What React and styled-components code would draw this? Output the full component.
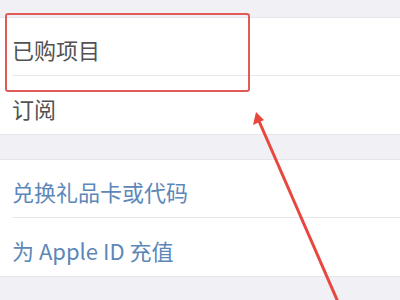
import React from "react";
import styled, { createGlobalStyle } from "styled-components";

const Global = createGlobalStyle`
  html, body { margin: 0; padding: 0; background: #f0f0f5; }
  body { font-family: "Noto Sans CJK SC", "Noto Sans", sans-serif; }
`;

const Page = styled.div`
  position: relative;
  width: 400px;
  height: 300px;
  overflow: hidden;
  background: #f0f0f5;
  padding-top: 17px;
  box-sizing: border-box;
  display: flex;
  flex-direction: column;
  gap: 24px;
`;

const Section = styled.div`
  background: #ffffff;
  border-top: 1px solid #e6e6ea;
  border-bottom: 1px solid #e6e6ea;
`;

const Row = styled.div`
  height: 58px;
  padding-left: 12px;
  display: flex;
`;

const RowInner = styled.div`
  flex: 1;
  display: flex;
  align-items: center;
  padding-top: 5px;
  box-sizing: border-box;
  border-bottom: ${(p) => (p.$last ? "none" : "1px solid #e8e8ec")};
  font-size: 22px;
  color: ${(p) => (p.$link ? "#5d87b8" : "#525254")};
`;

const Overlay = styled.svg`
  position: absolute;
  left: 0;
  top: 0;
  pointer-events: none;
`;

const Item = ({ children, link, last }) => (
  <Row>
    <RowInner $link={link} $last={last}>{children}</RowInner>
  </Row>
);

export default function App() {
  return (
    <>
      <Global />
      <Page>
        <Section>
          <Item>已购项目</Item>
          <Item last>订阅</Item>
        </Section>
        <Section>
          <Item link>兑换礼品卡或代码</Item>
          <Item link last>为 Apple ID 充值</Item>
        </Section>
        <Overlay width="400" height="300" viewBox="0 0 400 300">
          <rect x="6" y="14" width="243" height="77" rx="2" fill="none" stroke="#e05a5a" strokeWidth="2" />
          <line x1="259" y1="121" x2="338" y2="302" stroke="#e8473f" strokeWidth="3" />
          <polygon points="256,112 253,125 264,120" fill="#e8473f" />
        </Overlay>
      </Page>
    </>
  );
}
